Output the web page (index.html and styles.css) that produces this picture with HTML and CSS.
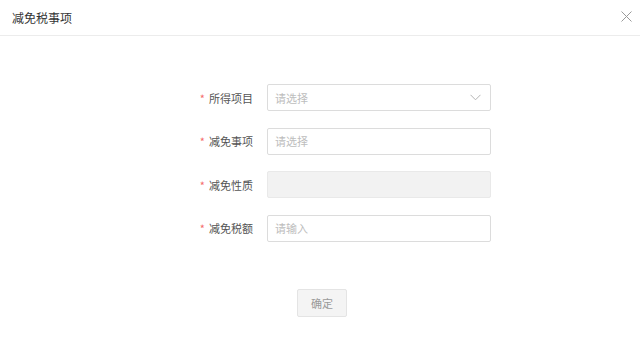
FILE: index.html
```html
<!DOCTYPE html>
<html lang="zh-CN">
  <head>
    <meta charset="UTF-8" />
    <meta name="viewport" content="width=device-width, initial-scale=1.0" />
    <title>减免税事项</title>
    <link rel="stylesheet" href="styles.css">
  </head>
  <body>
    <div class="dialog">
      <div class="header">
        <span class="title">减免税事项</span>
        <span class="close">
          <svg width="11" height="11" viewBox="0 0 11 11">
            <path d="M0.5 0.5L10.5 10.5M10.5 0.5L0.5 10.5" stroke="#9a9a9a" stroke-width="1" fill="none" />
          </svg>
        </span>
      </div>
      <div class="form">
        <div class="row">
          <label class="label"><span class="star">*</span>所得项目</label>
          <div class="input select">
            <span class="placeholder">请选择</span>
            <svg class="arrow" width="11" height="7" viewBox="0 0 11 7">
              <path d="M0.5 0.8L5.5 5.8L10.5 0.8" stroke="#b4b4b4" stroke-width="1" fill="none" />
            </svg>
          </div>
        </div>
        <div class="row">
          <label class="label"><span class="star">*</span>减免事项</label>
          <div class="input"><span class="placeholder">请选择</span></div>
        </div>
        <div class="row">
          <label class="label"><span class="star">*</span>减免性质</label>
          <div class="input disabled"></div>
        </div>
        <div class="row">
          <label class="label"><span class="star">*</span>减免税额</label>
          <div class="input"><span class="placeholder">请输入</span></div>
        </div>
      </div>
      <div class="footer">
        <button class="button">确定</button>
      </div>
    </div>
  </body>
</html>
```

FILE: styles.css
```css
body {
  font-family: "Noto Sans CJK SC", "Noto Sans", sans-serif;
  background-color: #fff;
  margin: 0;
  padding: 0;
}
.dialog {
  width: 640px;
  height: 341px;
  background-color: #fff;
}
.header {
  height: 35px;
  border-bottom: 1px solid #ececec;
  display: flex;
  align-items: center;
  justify-content: space-between;
  padding: 0 8px 0 12px;
}
.title {
  font-size: 12px;
  color: #333;
}
.close {
  display: flex;
  margin-top: -2px;
}
.form {
  display: flex;
  flex-direction: column;
  gap: 16.67px;
  padding-top: 48px;
}
.row {
  display: flex;
  align-items: center;
}
.label {
  width: 267px;
  box-sizing: border-box;
  padding-right: 14px;
  text-align: right;
  font-size: 11px;
  color: #555;
}
.star {
  color: #f56c6c;
  margin-right: 4px;
}
.input {
  width: 224px;
  height: 27px;
  box-sizing: border-box;
  border: 1px solid #dcdcdc;
  border-radius: 2px;
  display: flex;
  align-items: center;
  justify-content: space-between;
  padding: 0 9px 0 7px;
}
.placeholder {
  font-size: 11px;
  color: #bdbdbd;
}
.disabled {
  background-color: #f2f2f2;
  border-color: #e9e9e9;
}
.footer {
  padding-top: 47px;
  padding-left: 297px;
}
.button {
  width: 50px;
  height: 28px;
  background-color: #f4f4f4;
  border: 1px solid #e4e4e4;
  border-radius: 2px;
  font-family: inherit;
  font-size: 11px;
  color: #9a9a9a;
  padding: 0;
}
```
